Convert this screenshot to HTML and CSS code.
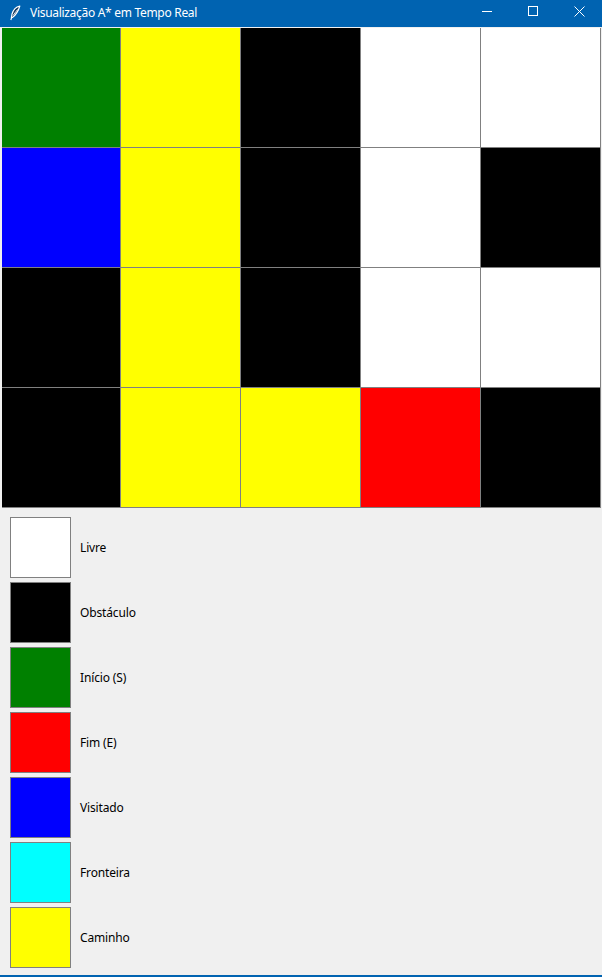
FILE: index.html
```html
<!DOCTYPE html>
<html lang="pt">
<head>
<meta charset="utf-8">
<title>Visualização A* em Tempo Real</title>
<link rel="stylesheet" href="styles.css">
</head>
<body>
<div class="window">
  <header class="titlebar">
    <svg class="app-icon" width="12" height="16" viewBox="0 0 12 16">
      <path d="M10.8 1 C7.5 1.8 4.2 5 3 9 L2.4 12.6 L3.6 12.4 C6.5 10 9.5 5.5 10.8 1 Z" fill="#14365c" stroke="#ffffff" stroke-width="1.2" stroke-linejoin="round"/>
      <path d="M4 10.5 L8.5 4.5" stroke="#ffffff" stroke-width="0.8" fill="none"/>
      <path d="M2.7 12.3 L1.8 15" stroke="#ffffff" stroke-width="1.1" fill="none"/>
    </svg>
    <span class="title">Visualização A* em Tempo Real</span>
    <div class="controls">
      <div class="ctl"><span class="min"></span></div>
      <div class="ctl"><span class="max"></span></div>
      <div class="ctl">
        <svg width="11" height="11" viewBox="0 0 11 11"><path d="M0.5 0.5 L10.5 10.5 M10.5 0.5 L0.5 10.5" stroke="#fff" stroke-width="1"/></svg>
      </div>
    </div>
  </header>

  <div class="grid">
    <div class="cell green"></div><div class="cell yellow"></div><div class="cell black"></div><div class="cell white"></div><div class="cell white"></div>
    <div class="cell blue"></div><div class="cell yellow"></div><div class="cell black"></div><div class="cell white"></div><div class="cell black"></div>
    <div class="cell black"></div><div class="cell yellow"></div><div class="cell black"></div><div class="cell white"></div><div class="cell white"></div>
    <div class="cell black"></div><div class="cell yellow"></div><div class="cell yellow"></div><div class="cell red"></div><div class="cell black"></div>
  </div>

  <ul class="legend">
    <li><span class="swatch white"></span><span class="label">Livre</span></li>
    <li><span class="swatch black"></span><span class="label">Obstáculo</span></li>
    <li><span class="swatch green"></span><span class="label">Início (S)</span></li>
    <li><span class="swatch red"></span><span class="label">Fim (E)</span></li>
    <li><span class="swatch blue"></span><span class="label">Visitado</span></li>
    <li><span class="swatch cyan"></span><span class="label">Fronteira</span></li>
    <li><span class="swatch yellow"></span><span class="label">Caminho</span></li>
  </ul>

  <div class="bottom-frame"></div>
</div>
</body>
</html>
```

FILE: styles.css
```css
* { box-sizing: border-box; }
html, body { margin: 0; padding: 0; }
body {
  background: #f0f0f0;
  font-family: "Segoe UI", "Noto Sans", "Open Sans", sans-serif;
  font-size: 12px;
  color: #000;
}
.window {
  width: 602px;
  height: 977px;
  display: flex;
  flex-direction: column;
  overflow: hidden;
}
.titlebar {
  height: 27px;
  flex: none;
  background: #0063b1;
  color: #fff;
  display: flex;
  align-items: center;
  padding-left: 9px;
}
.app-icon { flex: none; margin-top: -2px; }
.title {
  margin-left: 9px;
  font-size: 12px;
  letter-spacing: -0.3px;
  line-height: 16px;
  margin-top: -2px;
}
.controls {
  margin-left: auto;
  display: flex;
  height: 100%;
}
.ctl {
  width: 46px;
  height: 100%;
  display: flex;
  align-items: center;
  justify-content: center;
  padding-bottom: 5px;
}
.min { width: 10px; height: 1px; background: #fff; }
.max { width: 10px; height: 10px; border: 1px solid #fff; }

.grid {
  margin: 1px 0 0 2px;
  width: 599px;
  display: grid;
  grid-template-columns: 118px repeat(4, 119px);
  grid-template-rows: repeat(4, 119px);
  gap: 1px;
  padding: 0 1px 1px 0;
  background: #808080;
  flex: none;
}
.green { background: #008000; }
.yellow { background: #ffff00; }
.black { background: #000000; }
.white { background: #ffffff; }
.blue { background: #0000ff; }
.red { background: #ff0000; }
.cyan { background: #00ffff; }

.legend {
  list-style: none;
  margin: 0;
  padding: 9px 0 0 10px;
  display: flex;
  flex-direction: column;
  gap: 4px;
}
.legend li {
  display: flex;
  align-items: center;
  gap: 9px;
}
.swatch {
  width: 61px;
  height: 61px;
  border: 1px solid #808080;
  flex: none;
}
.label { line-height: 16px; letter-spacing: -0.15px; }

.bottom-frame {
  margin-top: auto;
  height: 2px;
  background: #0063b1;
  flex: none;
}
```
